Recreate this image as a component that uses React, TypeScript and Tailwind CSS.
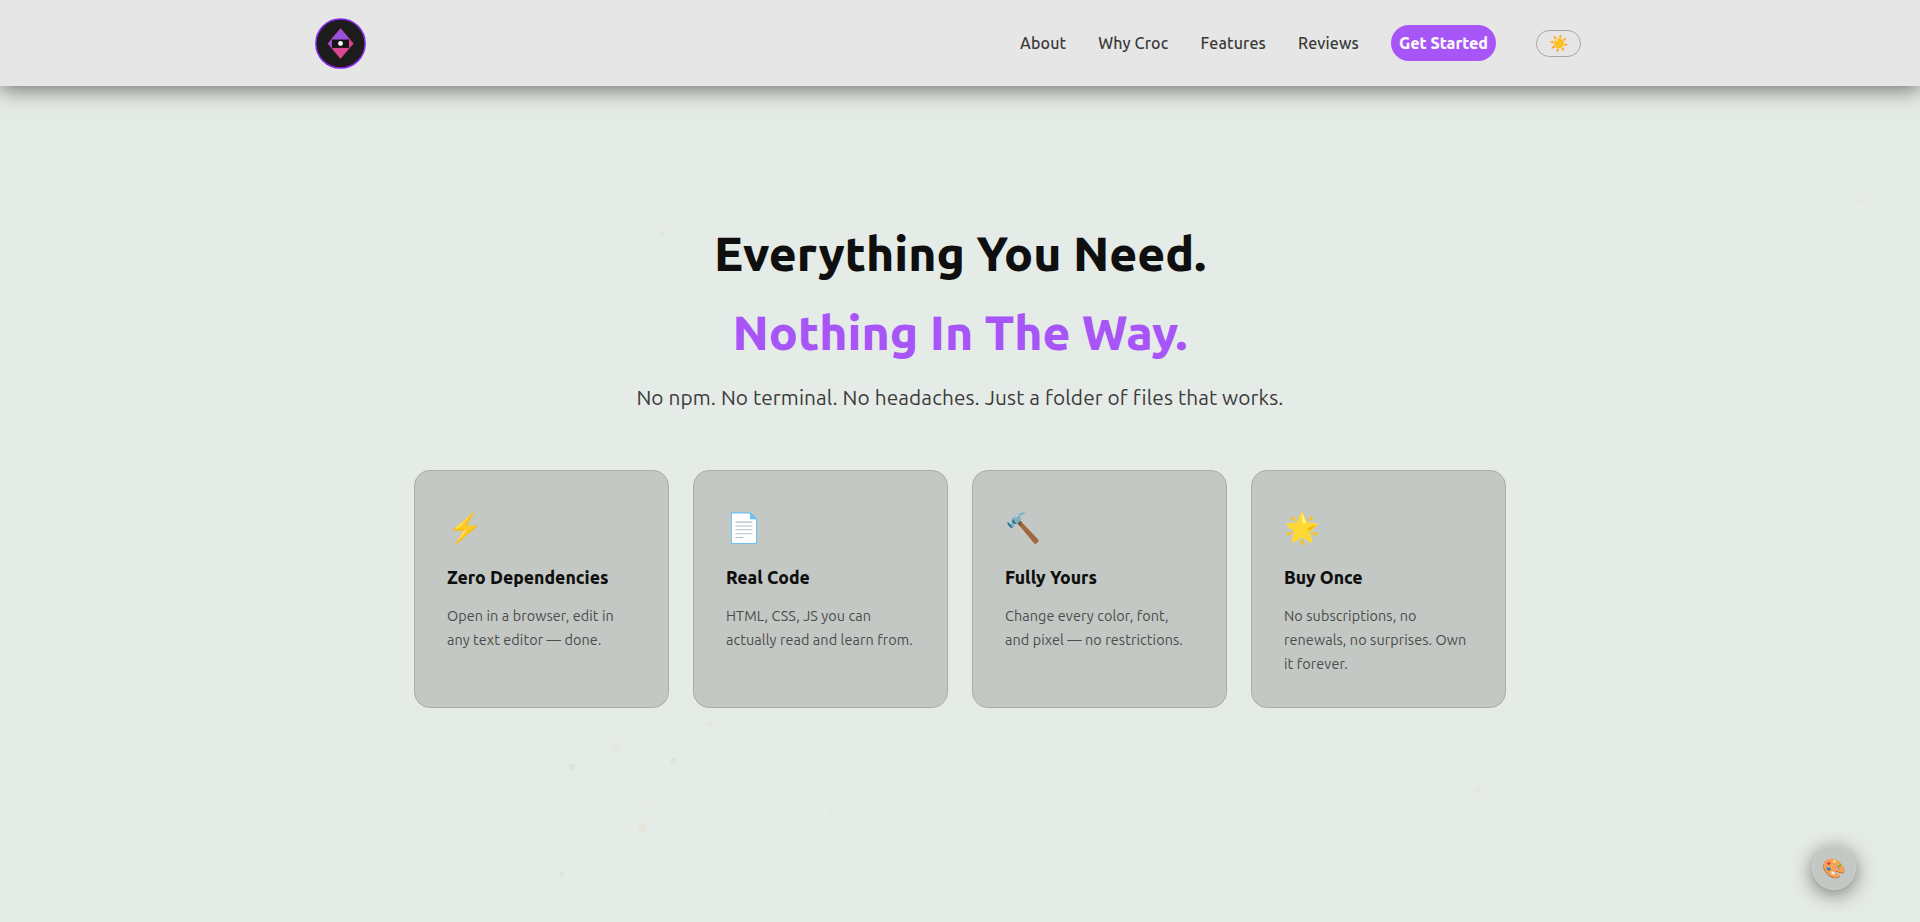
const links = ["About", "Why Croc", "Features", "Reviews"];

const cards = [
  { icon: "⚡", title: "Zero Dependencies", text: "Open in a browser, edit in any text editor — done." },
  { icon: "📄", title: "Real Code", text: "HTML, CSS, JS you can actually read and learn from." },
  { icon: "🔨", title: "Fully Yours", text: "Change every color, font, and pixel — no restrictions." },
  { icon: "🌟", title: "Buy Once", text: "No subscriptions, no renewals, no surprises. Own it forever." },
];

const particles: [number, number, number, string][] = [
  [572, 766.7, 3, "#dce3de"],
  [615.7, 747.7, 4, "#e1e8df"],
  [673.3, 760.7, 3, "#dde4df"],
  [710.7, 724, 3, "#e3e7dc"],
  [647.3, 800, 2.5, "#e1e7e3"],
  [642.7, 827.7, 4, "#e3e5db"],
  [561.7, 874.3, 2.5, "#dce3de"],
  [831, 812, 1.5, "#e0e6e1"],
  [663, 233.7, 3, "#e1e7e2"],
  [1861.5, 200.5, 3, "#e5e8df"],
  [1477.7, 790.5, 3, "#e2e9e0"],
];

function Logo() {
  return (
    <svg width="51" height="51" viewBox="0 0 51 51">
      <circle cx="25.5" cy="25.5" r="24.6" fill="#1c1c1c" stroke="#8427ea" strokeWidth="1.5" />
      <path d="M14 46Q25.500 52 37 46Q25.500 50.500 14 46Z" fill="#3a1020" />
      <path d="M25.500 10.500L35 21.700H16Z" fill="#9b51e0" />
      <path d="M25.500 40.500L16.500 29.700H34.500Z" fill="#dd4690" />
      <path d="M17 21V30.200L13 25.500Z" fill="#9b51e0" />
      <path d="M34 21V30.200L38.300 25.500Z" fill="#dd4690" />
      <path
        d="M25.500 10.500L38.300 25.500L25.500 40.500L13 25.500Z"
        fill="none"
        stroke="#d9468f"
        strokeWidth="0.8"
        strokeOpacity="0.8"
      />
      <rect x="17" y="21.700" width="17" height="8" fill="#161616" />
      <circle cx="25.500" cy="25.500" r="2.400" fill="#ffffff" />
    </svg>
  );
}

export default function App() {
  return (
    <div className="relative flex h-[922px] flex-col overflow-hidden bg-[#e5ebe6] font-['Ubuntu','Noto_Sans',sans-serif] leading-[1.65]">
      <svg className="pointer-events-none absolute inset-0" width="1920" height="922">
        {particles.map(([x, y, r, c], i) => (
          <circle key={i} cx={x} cy={y} r={r} fill={c} />
        ))}
      </svg>

      <header className="relative flex h-[86px] shrink-0 justify-center bg-[#e6e6e6] shadow-[0_4px_20px_rgba(0,0,0,0.5)]">
        <div className="flex w-[1290px] items-center justify-between pr-6">
          <Logo />
          <div className="flex items-center gap-10">
            <nav className="flex items-center gap-8 text-base font-medium text-[#3a3a3a]">
              {links.map((l) => (
                <a key={l} className="tracking-[0.15px]">
                  {l}
                </a>
              ))}
              <a className="flex h-9 items-center rounded-[20px] bg-[#a855f7] px-2 font-extrabold text-[#f8f8f8]">
                Get Started
              </a>
            </nav>
            <button className="flex h-[27px] w-[45px] items-center justify-center rounded-full border border-[#a6a6a6] text-base leading-none">
              ☀️
            </button>
          </div>
        </div>
      </header>

      <main className="relative flex flex-col items-center pt-32">
        <h1 className="text-center text-5xl leading-[1.65] font-extrabold text-[#0f0f0f]">
          Everything You Need.
          <br />
          <span className="text-[#a855f7]">Nothing In The Way.</span>
        </h1>
        <p className="mt-[9px] text-[20.8px] tracking-[0.11px] text-[#3c3c3c]">
          No npm. No terminal. No headaches. Just a folder of files that works.
        </p>
        <section className="mt-[54px] grid h-[238px] w-[1092px] grid-cols-4 gap-6">
          {cards.map((c) => (
            <article key={c.title} className="rounded-2xl border border-[#a9aeaa] bg-[#c4c8c4] px-8 pt-[33px]">
              <div className="text-[28.8px]">{c.icon}</div>
              <h3 className="mt-3 text-[17.6px] font-extrabold text-[#0f0f0f]">{c.title}</h3>
              <p className="mt-[13px] text-[14.4px] tracking-[0.09px] text-[#4c4c4c]">{c.text}</p>
            </article>
          ))}
        </section>
      </main>

      <button className="absolute right-16 bottom-8 flex size-11 items-center justify-center rounded-full border border-[#cdd1ce] bg-[#c4c8c4] pt-px text-[19.2px] leading-none shadow-[0_4px_20px_rgba(0,0,0,0.5)]">
        🎨
      </button>
    </div>
  );
}
